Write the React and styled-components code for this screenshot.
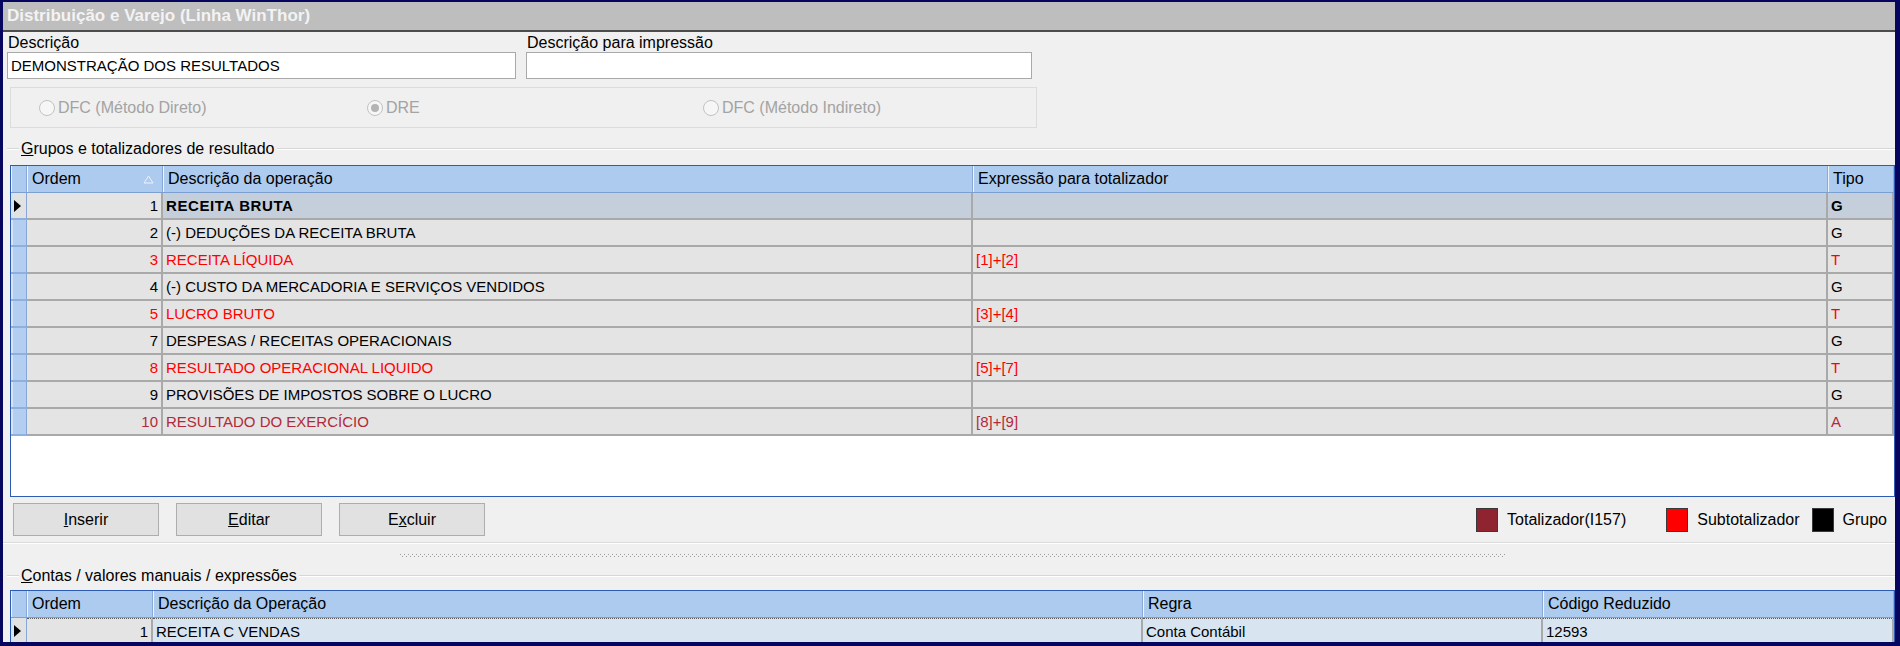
import React from "react";
import styled, { createGlobalStyle } from "styled-components";

const GlobalStyle = createGlobalStyle`
  html, body {
    margin: 0;
    padding: 0;
    background: #06065e;
  }
  body {
    font-family: "Liberation Sans", Arial, sans-serif;
    color: #000;
  }
`;

const GRUPOS_COLS = "16px 136px 810px 855px 1fr";
const CONTAS_COLS = "16px 126px 990px 400px 1fr";

const TIPO_COR = {
  G: "#000000",
  T: "#ff0000",
  A: "#b22a3a",
};

const grupos = [
  { ordem: 1, descricao: "RECEITA BRUTA", expressao: "", tipo: "G", negrito: true },
  { ordem: 2, descricao: "(-) DEDUÇÕES DA RECEITA BRUTA", expressao: "", tipo: "G" },
  { ordem: 3, descricao: "RECEITA LÍQUIDA", expressao: "[1]+[2]", tipo: "T" },
  { ordem: 4, descricao: "(-) CUSTO DA MERCADORIA E SERVIÇOS VENDIDOS", expressao: "", tipo: "G" },
  { ordem: 5, descricao: "LUCRO BRUTO", expressao: "[3]+[4]", tipo: "T" },
  { ordem: 7, descricao: "DESPESAS / RECEITAS OPERACIONAIS", expressao: "", tipo: "G" },
  { ordem: 8, descricao: "RESULTADO OPERACIONAL LIQUIDO", expressao: "[5]+[7]", tipo: "T" },
  { ordem: 9, descricao: "PROVISÕES DE IMPOSTOS SOBRE O LUCRO", expressao: "", tipo: "G" },
  { ordem: 10, descricao: "RESULTADO DO EXERCÍCIO", expressao: "[8]+[9]", tipo: "A" },
];

const contas = [
  { ordem: 1, descricao: "RECEITA C VENDAS", regra: "Conta Contábil", codigo: "12593" },
];

export default function App() {
  return (
    <>
      <GlobalStyle />
      <Janela>
        <TitleBar>Distribuição e Varejo (Linha WinThor)</TitleBar>

        <FieldsRow>
          <Field>
            <FieldLabel>Descrição</FieldLabel>
            <TextBox $width={509}>DEMONSTRAÇÃO DOS RESULTADOS</TextBox>
          </Field>
          <Field>
            <FieldLabel>Descrição para impressão</FieldLabel>
            <TextBox $width={506}></TextBox>
          </Field>
        </FieldsRow>

        <RadioBox>
          <RadioItem $width={328}>
            <RadioCircle />
            DFC (Método Direto)
          </RadioItem>
          <RadioItem $width={336}>
            <RadioCircle $checked />
            DRE
          </RadioItem>
          <RadioItem>
            <RadioCircle />
            DFC (Método Indireto)
          </RadioItem>
        </RadioBox>

        <GroupTitle $top={12}>
          <span><u>G</u>rupos e totalizadores de resultado</span>
        </GroupTitle>

        <Grade $height={332} $top={7}>
          <Linha $cols={GRUPOS_COLS}>
            <HeadCell />
            <HeadCell>
              Ordem
              <SortMark width="11" height="9" viewBox="0 0 11 9">
                <path d="M5.5 1 L10 8 L1 8 Z" fill="none" stroke="#eef3fb" strokeWidth="1" />
              </SortMark>
            </HeadCell>
            <HeadCell>Descrição da operação</HeadCell>
            <HeadCell>Expressão para totalizador</HeadCell>
            <HeadCell>Tipo</HeadCell>
          </Linha>
          {grupos.map((g, i) => {
            const atual = i === 0;
            const cor = TIPO_COR[g.tipo];
            const fundo = atual ? "#c4cfdb" : "#e4e4e4";
            return (
              <Linha key={g.ordem} $cols={GRUPOS_COLS}>
                <Indicador $current={atual}>{atual && <Seta />}</Indicador>
                <Cell $bg="#e4e4e4" $color={cor} $align="right">{g.ordem}</Cell>
                <Cell $bg={fundo} $color={cor} $bold={g.negrito}>{g.descricao}</Cell>
                <Cell $bg={fundo} $color={cor}>{g.expressao}</Cell>
                <Cell $bg={fundo} $color={cor} $bold={g.negrito}>{g.tipo}</Cell>
              </Linha>
            );
          })}
        </Grade>

        <Toolbar>
          <Botao><u>I</u>nserir</Botao>
          <Botao><u>E</u>ditar</Botao>
          <Botao>E<u>x</u>cluir</Botao>
          <Legenda>
            <LegendaItem>
              <Swatch $color="#8f2430" />
              Totalizador(I157)
            </LegendaItem>
            <LegendaItem $gap={40}>
              <Swatch $color="#ff0000" />
              Subtotalizador
            </LegendaItem>
            <LegendaItem $gap={12}>
              <Swatch $color="#000000" />
              Grupo
            </LegendaItem>
          </Legenda>
        </Toolbar>

        <Divisor />
        <Splitter>
          <Pontilhado />
        </Splitter>

        <GroupTitle $top={0}>
          <span><u>C</u>ontas / valores manuais / expressões</span>
        </GroupTitle>

        <Grade $height={80} $top={5}>
          <Linha $cols={CONTAS_COLS}>
            <HeadCell />
            <HeadCell>Ordem</HeadCell>
            <HeadCell>Descrição da Operação</HeadCell>
            <HeadCell>Regra</HeadCell>
            <HeadCell>Código Reduzido</HeadCell>
          </Linha>
          {contas.map((c) => (
            <Linha key={c.ordem} $cols={CONTAS_COLS}>
              <Indicador $current><Seta /></Indicador>
              <Cell $bg="#e4e4e4" $align="right" $focus>{c.ordem}</Cell>
              <Cell $bg="#d9e4f1" $focus>{c.descricao}</Cell>
              <Cell $bg="#d9e4f1" $focus>{c.regra}</Cell>
              <Cell $bg="#d9e4f1" $focus>{c.codigo}</Cell>
            </Linha>
          ))}
        </Grade>
      </Janela>
    </>
  );
}

function Seta() {
  return (
    <svg width="7" height="12" viewBox="0 0 7 12">
      <path d="M0 0 L7 6 L0 12 Z" fill="#000" />
    </svg>
  );
}

const Janela = styled.div`
  margin: 2px 5px 0 3px;
  height: 640px;
  background: #f0f0f0;
  overflow: hidden;
  display: flex;
  flex-direction: column;

  & > * {
    flex-shrink: 0;
  }
`;

const TitleBar = styled.div`
  height: 28px;
  background: #bebebe;
  border-bottom: 2px solid #4c4c4c;
  color: #f3f3f3;
  font-size: 17px;
  font-weight: bold;
  line-height: 28px;
  padding-left: 4px;
  white-space: nowrap;
`;

const FieldsRow = styled.div`
  display: flex;
  gap: 10px;
  padding: 2px 0 0 4px;
`;

const Field = styled.div`
  display: flex;
  flex-direction: column;
`;

const FieldLabel = styled.label`
  font-size: 16px;
  line-height: 18px;
  padding-left: 1px;
`;

const TextBox = styled.div`
  width: ${(p) => p.$width}px;
  height: 27px;
  box-sizing: border-box;
  background: #ffffff;
  border: 1px solid #a9a9a9;
  font-size: 15px;
  line-height: 25px;
  padding-left: 3px;
  white-space: nowrap;
`;

const RadioBox = styled.div`
  display: flex;
  align-items: center;
  width: 1027px;
  height: 41px;
  box-sizing: border-box;
  margin: 8px 0 0 7px;
  padding-left: 28px;
  border: 1px solid #dcdcdc;
`;

const RadioItem = styled.div`
  display: flex;
  align-items: center;
  gap: 3px;
  width: ${(p) => (p.$width ? `${p.$width}px` : "auto")};
  font-size: 16px;
  color: #a3a3a3;
  white-space: nowrap;
`;

const RadioCircle = styled.span`
  width: 14px;
  height: 14px;
  border-radius: 50%;
  border: 1px solid #c2c2c2;
  background: #f6f6f6;
  display: flex;
  align-items: center;
  justify-content: center;

  &::after {
    content: "";
    display: ${(p) => (p.$checked ? "block" : "none")};
    width: 8px;
    height: 8px;
    border-radius: 50%;
    background: #b4b4b4;
  }
`;

const GroupTitle = styled.div`
  display: flex;
  align-items: center;
  height: 18px;
  margin: ${(p) => p.$top}px 0 0 4px;
  font-size: 16px;
  white-space: nowrap;

  &::before,
  &::after {
    content: "";
    height: 1px;
    background: #d6d6d6;
    border-bottom: 1px solid #ffffff;
  }
  &::before {
    width: 12px;
  }
  &::after {
    flex: 1;
  }

  span {
    padding: 0 2px;
  }
`;

const Grade = styled.div`
  margin: ${(p) => p.$top}px 0 0 7px;
  height: ${(p) => p.$height}px;
  box-sizing: border-box;
  border: 1px solid #2d5cb6;
  background: #ffffff;
  overflow: hidden;
`;

const Linha = styled.div`
  display: grid;
  grid-template-columns: ${(p) => p.$cols};
`;

const HeadCell = styled.div`
  position: relative;
  height: 26px;
  border-bottom: 1px solid #7c9fd2;
  background: #adcaef;
  box-shadow: inset 1px 0 #eef4fc, inset -1px 0 #8aa9d8;
  font-size: 16px;
  line-height: 26px;
  padding-left: 5px;
  white-space: nowrap;
  overflow: hidden;
`;

const SortMark = styled.svg`
  position: absolute;
  right: 9px;
  top: 9px;
`;

const Indicador = styled.div`
  height: 25px;
  border-bottom: 2px solid #8fb0df;
  border-right: 1px solid #86a7d8;
  background: ${(p) => (p.$current ? "#e2e2e2" : "#b4cef1")};
  box-shadow: inset 2px 0 #d6e4f7;
  display: flex;
  align-items: center;
  padding-left: 3px;
`;

const Cell = styled.div`
  height: 25px;
  box-sizing: content-box;
  border-bottom: 2px solid #a9a9a9;
  border-right: 2px solid #a9a9a9;
  border-top: ${(p) => (p.$focus ? "1px dotted #5a5a5a" : "0")};
  background: ${(p) => p.$bg};
  color: ${(p) => p.$color || "#000"};
  font-size: 15px;
  font-weight: ${(p) => (p.$bold ? "bold" : "normal")};
  letter-spacing: ${(p) => (p.$bold ? "0.6px" : "0")};
  line-height: 25px;
  text-align: ${(p) => p.$align || "left"};
  padding: 0 3px;
  white-space: nowrap;
  overflow: hidden;
`;

const Toolbar = styled.div`
  display: flex;
  align-items: center;
  gap: 17px;
  height: 33px;
  margin-top: 6px;
  padding-left: 10px;
`;

const Botao = styled.button`
  width: 146px;
  height: 33px;
  background: #e1e1e1;
  border: 1px solid #adadad;
  border-radius: 0;
  font-family: "Liberation Sans", Arial, sans-serif;
  font-size: 16px;
  color: #000;
  padding: 0;
`;

const Legenda = styled.div`
  display: flex;
  align-items: center;
  margin-left: auto;
  padding-right: 8px;
`;

const LegendaItem = styled.div`
  display: flex;
  align-items: center;
  gap: 9px;
  margin-left: ${(p) => p.$gap || 0}px;
  font-size: 16px;
  white-space: nowrap;
`;

const Swatch = styled.span`
  width: 20px;
  height: 22px;
  background: ${(p) => p.$color};
  border: 1px solid #3a3a3a;
`;

const Divisor = styled.div`
  margin-top: 6px;
  height: 1px;
  background: #dadada;
  border-bottom: 1px solid #ffffff;
`;

const Splitter = styled.div`
  height: 23px;
  display: flex;
  align-items: center;
  padding-left: 397px;
`;

const Pontilhado = styled.div`
  width: 1106px;
  height: 3px;
  background:
    linear-gradient(90deg, #9c9c9c 1px, transparent 1px) 0 0 / 4px 1px repeat-x,
    linear-gradient(90deg, #9c9c9c 1px, transparent 1px) 2px 2px / 4px 1px repeat-x;
`;
